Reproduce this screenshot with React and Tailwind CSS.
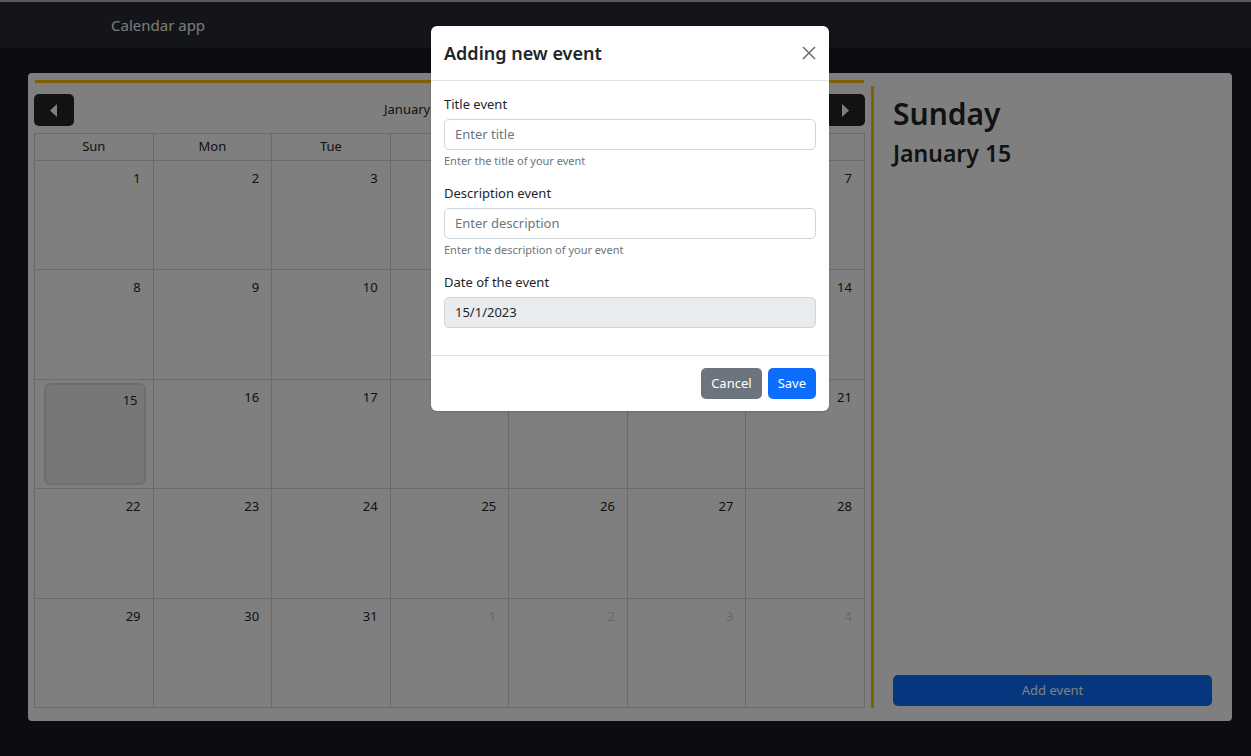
import React from "react";

const weekDays = ["Sun", "Mon", "Tue", "Wed", "Thu", "Fri", "Sat"];

// January 2023 starts on a Sunday, 35 cells shown
const cells = Array.from({ length: 35 }, (_, i) =>
  i < 31 ? { day: i + 1, current: true } : { day: i - 30, current: false }
);

function Caret({ dir }) {
  return (
    <svg width="8" height="13" viewBox="0 0 8 13">
      {dir === "left" ? (
        <polygon points="7,0 7,13 0,6.5" fill="#ffffff" />
      ) : (
        <polygon points="1,0 1,13 8,6.5" fill="#ffffff" />
      )}
    </svg>
  );
}

function DayCell({ cell }) {
  const selected = cell.current && cell.day === 15;
  if (selected) {
    return (
      <div className="border-r border-b border-[#d6d6d6] pl-[9px] pr-[7px] pt-[3px] pb-[3px]">
        <div className="h-full rounded-[6px] border-2 border-[#dcdcdc] bg-[#efefef] text-right pr-[6px] pt-[6px] text-[13px] text-[#212529]">
          {cell.day}
        </div>
      </div>
    );
  }
  return (
    <div
      className={
        "border-r border-b border-[#d6d6d6] text-right pr-[12px] pt-[8px] text-[13px] " +
        (cell.current ? "text-[#212529]" : "text-[#d2d2d2]")
      }
    >
      {cell.day}
    </div>
  );
}

function Field({ label, placeholder, help, value, disabled }) {
  return (
    <div className="mb-[14px]">
      <div className="text-[13px] text-[#212529] leading-[20px] mb-[5px]">{label}</div>
      <div
        className={
          "h-[31px] rounded-[5px] border border-[#ced4da] flex items-center px-[10px] text-[13px] " +
          (disabled ? "bg-[#e9ecef] text-[#212529]" : "bg-white text-[#6c757d]")
        }
      >
        {value || placeholder}
      </div>
      {help && <div className="text-[11px] text-[#6c757d] mt-[3px] leading-[16px]">{help}</div>}
    </div>
  );
}

export default function App() {
  return (
    <div className="relative w-full h-[756px] overflow-hidden bg-[#181a20] font-['Noto_Sans',sans-serif]">
      <div className="h-[2px] bg-[#b4b4bc]" />
      <nav className="h-[46px] bg-[#282a30] flex items-center pl-[111px]">
        <span className="text-[15px] text-[#f4f4f4]">Calendar app</span>
      </nav>

      <main className="ml-[28px] mt-[25px] w-[1204px] h-[648px] bg-white rounded-[4px] flex">
        {/* Calendar */}
        <section className="ml-[6px] w-[831px] pt-[7px] pb-[13px] flex flex-col">
          <div className="mx-[1px] h-[3px] bg-[#ffc107]" />
          <div className="mt-[11px] h-[32px] flex items-center justify-between">
            <button className="w-[40px] h-[32px] rounded-[5px] bg-[#212529] flex items-center justify-center">
              <Caret dir="left" />
            </button>
            <span className="flex-1 pl-[310px] text-[13px] text-[#212529]">January 2023</span>
            <button className="w-[40px] h-[32px] rounded-[5px] bg-[#212529] flex items-center justify-center">
              <Caret dir="right" />
            </button>
          </div>
          <div className="mt-[7px] flex-1 grid grid-cols-7 grid-rows-[27px_repeat(5,1fr)] border-l border-t border-[#d6d6d6]">
            {weekDays.map((d) => (
              <div
                key={d}
                className="border-r border-b border-[#d6d6d6] flex items-center justify-center text-[13px] text-[#212529]"
              >
                {d}
              </div>
            ))}
            {cells.map((c, i) => (
              <DayCell key={i} cell={c} />
            ))}
          </div>
        </section>

        {/* Day panel */}
        <aside className="ml-[6px] mt-[13px] mb-[13px] flex-1 border-l-[3px] border-[#ffc107] pl-[19px] pr-[20px] pt-[8px] pb-[2px] flex flex-col">
          <h1 className="text-[30px] font-semibold text-[#212529] leading-[40px]">Sunday</h1>
          <h2 className="mt-[4px] text-[23px] font-semibold text-[#212529] leading-[30px]">January 15</h2>
          <div className="flex-1" />
          <button className="h-[31px] w-full rounded-[5px] bg-[#0d6efd] text-[13px] text-white">Add event</button>
        </aside>
      </main>

      {/* Backdrop */}
      <div className="absolute inset-0 bg-black/50" />

      {/* Modal */}
      <div className="absolute left-[431px] top-[26px] w-[398px] bg-white rounded-[6px] shadow-sm">
        <div className="h-[55px] px-[13px] flex items-center justify-between border-b border-[#dee2e6]">
          <h5 className="text-[18px] font-semibold text-[#212529]">Adding new event</h5>
          <svg width="14" height="14" viewBox="0 0 14 14">
            <path d="M1 1L13 13M13 1L1 13" stroke="#6f7275" strokeWidth="1.6" />
          </svg>
        </div>
        <div className="px-[13px] pt-[13px] pb-[13px]">
          <Field label="Title event" placeholder="Enter title" help="Enter the title of your event" />
          <Field
            label="Description event"
            placeholder="Enter description"
            help="Enter the description of your event"
          />
          <Field label="Date of the event" value="15/1/2023" disabled />
        </div>
        <div className="h-[56px] border-t border-[#dee2e6] flex items-center justify-end gap-[6px] px-[13px]">
          <button className="h-[31px] px-[10px] rounded-[5px] bg-[#6c757d] text-[13px] text-white">Cancel</button>
          <button className="h-[31px] px-[10px] rounded-[5px] bg-[#0d6efd] text-[13px] text-white">Save</button>
        </div>
      </div>
    </div>
  );
}
